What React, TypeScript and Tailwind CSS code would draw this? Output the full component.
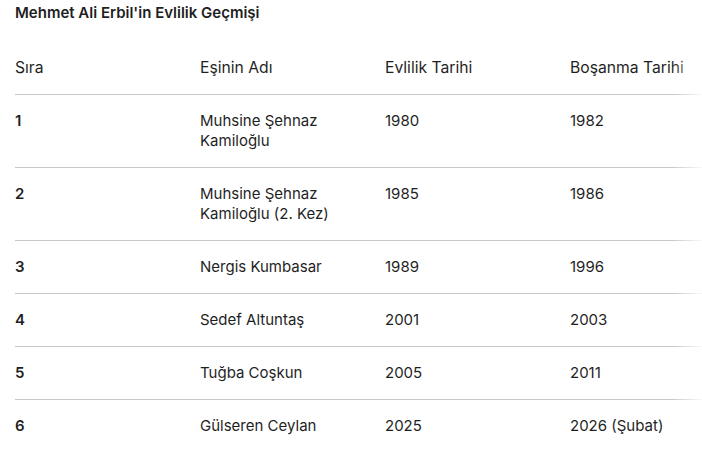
import React from "react";

const rows: [string, string[], string, string][] = [
  ["1", ["Muhsine Şehnaz", "Kamiloğlu"], "1980", "1982"],
  ["2", ["Muhsine Şehnaz", "Kamiloğlu (2. Kez)"], "1985", "1986"],
  ["3", ["Nergis Kumbasar"], "1989", "1996"],
  ["4", ["Sedef Altuntaş"], "2001", "2003"],
  ["5", ["Tuğba Coşkun"], "2005", "2011"],
  ["6", ["Gülseren Ceylan"], "2025", "2026 (Şubat)"],
];

export default function App() {
  return (
    <div
      className="w-[702px] h-[449px] bg-white text-[#1f1f1f] overflow-hidden relative"
      style={{ fontFamily: "Inter, 'Noto Sans', sans-serif" }}
    >
      <div className="pl-[15px] pt-[3px] text-[15px] leading-[20px] font-semibold">
        Mehmet Ali Erbil'in Evlilik Geçmişi
      </div>
      <div className="pl-[15px] pt-[35px]">
        <div className="w-[760px]">
          <div className="grid grid-cols-[185px_185px_185px_205px] border-b border-[#c7c7c7] pb-[16px] text-[15.7px] leading-[20px]">
            <div>Sıra</div>
            <div>Eşinin Adı</div>
            <div>Evlilik Tarihi</div>
            <div>Boşanma Tarihi</div>
          </div>
          {rows.map((r, i) => (
            <div
              key={r[0]}
              className={
                "grid grid-cols-[185px_185px_185px_205px] py-[16px] text-[15px] leading-[20px] " +
                (i < rows.length - 1 ? "border-b border-[#c7c7c7]" : "")
              }
            >
              <div className="font-semibold">{r[0]}</div>
              <div>
                {r[1].map((l) => (
                  <div key={l}>{l}</div>
                ))}
              </div>
              <div>{r[2]}</div>
              <div>{r[3]}</div>
            </div>
          ))}
        </div>
      </div>
      <div className="absolute top-0 right-0 h-full w-[30px] bg-gradient-to-r from-white/0 to-white/90" />
    </div>
  );
}
